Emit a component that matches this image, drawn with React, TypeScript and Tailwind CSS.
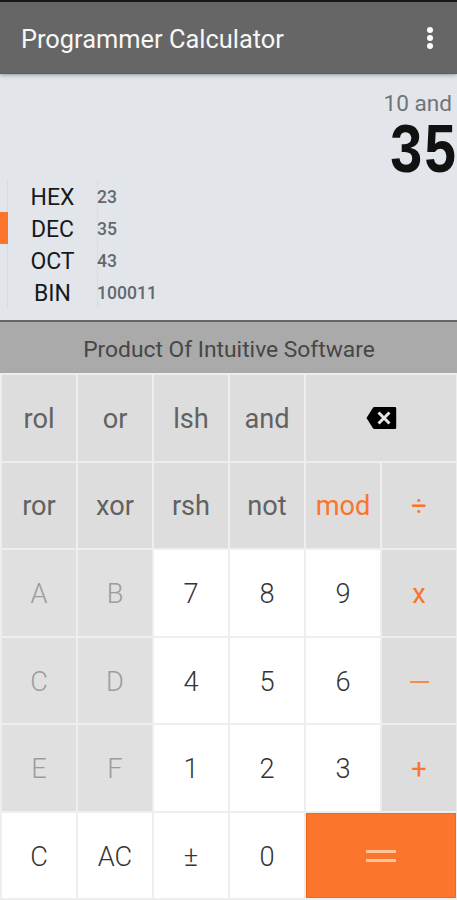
import { ReactNode } from "react";

type Key = { id: string; label: ReactNode; cls: string };

const fn = "bg-[#dddddd] text-[#626262] pt-[3px]";
const op = "bg-[#dddddd] text-[#f9742c] pt-[3px]";
const off = "bg-[#e0e0e0] text-[#9c9c9c] font-light pt-1";
const num = "bg-white text-[#343434] font-light pt-1";

const Backspace = () => (
  <svg width="31" height="24" viewBox="0 0 31 24">
    <path d="M8.5 1H29a1.2 1.2 0 0 1 1.2 1.2v19.6A1.2 1.2 0 0 1 29 23H8.5a2 2 0 0 1-1.7-1L.5 12l6.3-10a2 2 0 0 1 1.7-1z" fill="#000" />
    <path d="M12.5 6.5l11 11M23.5 6.5l-11 11" stroke="#e4e4e4" strokeWidth="3" />
  </svg>
);

const keys: Key[] = [
  { id: "rol", label: "rol", cls: fn },
  { id: "or", label: "or", cls: fn },
  { id: "lsh", label: "lsh", cls: fn },
  { id: "and", label: "and", cls: fn },
  { id: "back", label: <Backspace />, cls: "bg-[#dddddd] col-span-2 pl-px" },
  { id: "ror", label: "ror", cls: fn },
  { id: "xor", label: "xor", cls: fn },
  { id: "rsh", label: "rsh", cls: fn },
  { id: "not", label: "not", cls: fn },
  { id: "mod", label: "mod", cls: op },
  { id: "div", label: "÷", cls: op },
  { id: "A", label: "A", cls: off },
  { id: "B", label: "B", cls: off },
  { id: "7", label: "7", cls: num },
  { id: "8", label: "8", cls: num },
  { id: "9", label: "9", cls: num },
  { id: "mul", label: "x", cls: op },
  { id: "hexC", label: "C", cls: off },
  { id: "D", label: "D", cls: off },
  { id: "4", label: "4", cls: num },
  { id: "5", label: "5", cls: num },
  { id: "6", label: "6", cls: num },
  { id: "sub", label: <span className="block h-0.5 w-[19px] bg-[#f58a55]" />, cls: op },
  { id: "E", label: "E", cls: off },
  { id: "F", label: "F", cls: off },
  { id: "1", label: "1", cls: num },
  { id: "2", label: "2", cls: num },
  { id: "3", label: "3", cls: num },
  { id: "add", label: "+", cls: op },
  { id: "clear", label: "C", cls: num },
  { id: "AC", label: "AC", cls: num },
  { id: "sign", label: "±", cls: num },
  { id: "0", label: "0", cls: num },
  {
    id: "eq",
    label: (
      <span className="flex h-3 w-[30px] flex-col justify-between">
        <span className="h-[3.5px] bg-[#ffc49e]" />
        <span className="h-[3px] bg-[#ffc49e]" />
      </span>
    ),
    cls: "bg-[#fb752d] border border-[#f4690f] col-span-2 pt-px",
  },
];

const bases = [
  { name: "HEX", value: "23", active: false },
  { name: "DEC", value: "35", active: true },
  { name: "OCT", value: "43", active: false },
  { name: "BIN", value: "100011", active: false },
];

export default function App() {
  return (
    <div className="flex h-[900px] w-[457px] flex-col overflow-hidden bg-white font-['Roboto',sans-serif]">
      <header className="z-10 flex h-[74px] shrink-0 items-center justify-between border-t-2 border-b border-t-[#171717] border-b-[#5c5c5c] bg-[#666666] pr-[24px] pl-[21px] shadow-[0_1px_4px_rgba(0,0,0,0.35)]">
        <h1 className="pt-0.5 text-[25.4px] leading-8 text-[#f7f7f7]">Programmer Calculator</h1>
        <div className="flex flex-col gap-[2px]">
          <span className="size-1.5 rounded-full bg-white" />
          <span className="size-1.5 rounded-full bg-white" />
          <span className="size-1.5 rounded-full bg-white" />
        </div>
      </header>

      <section className="flex h-[246px] shrink-0 flex-col bg-[#e2e6ea]">
        <div className="flex h-[106px] flex-col items-end pt-[16px]">
          <div className="pr-[5px] text-[22.6px] leading-7 text-[#717477]">10 and</div>
          <div className="origin-right scale-x-[0.8] font-['Liberation_Mono',monospace] text-[71px] leading-[70px] font-bold text-[#111]">35</div>
        </div>
        <div className="flex flex-col">
          {bases.map((b) => (
            <div key={b.name} className="flex h-8 items-center">
              <div className={b.active ? "h-8 w-2 bg-[#fb752d]" : "h-8 w-2 border-r border-[#d9dcdf]"} />
              <div className="w-[89px] pt-1 text-center text-[23px] leading-8 text-[#17191b]">{b.name}</div>
              <div className="h-8 border-l border-[#dadde0] pt-px text-[17.6px] leading-8 font-medium text-[#65686b]">
                <span className="-ml-px">{b.value}</span>
              </div>
            </div>
          ))}
        </div>
      </section>

      <div className="flex h-[53px] shrink-0 items-center justify-center border-t-2 border-t-[#626466] bg-[#aaaaaa] pt-1.5 pl-px text-[22.8px] text-[#464646]">
        Product Of Intuitive Software
      </div>

      <main className="grid h-[527px] shrink-0 grid-cols-6 grid-rows-6 gap-[2px] bg-[#eeeeee] pt-[2px] pr-px pb-[2px] pl-[2px]">
        {keys.map((k) => (
          <button key={k.id} className={`flex min-w-0 items-center justify-center text-[27.2px] leading-none ${k.cls}`}>
            {k.label}
          </button>
        ))}
      </main>
    </div>
  );
}
